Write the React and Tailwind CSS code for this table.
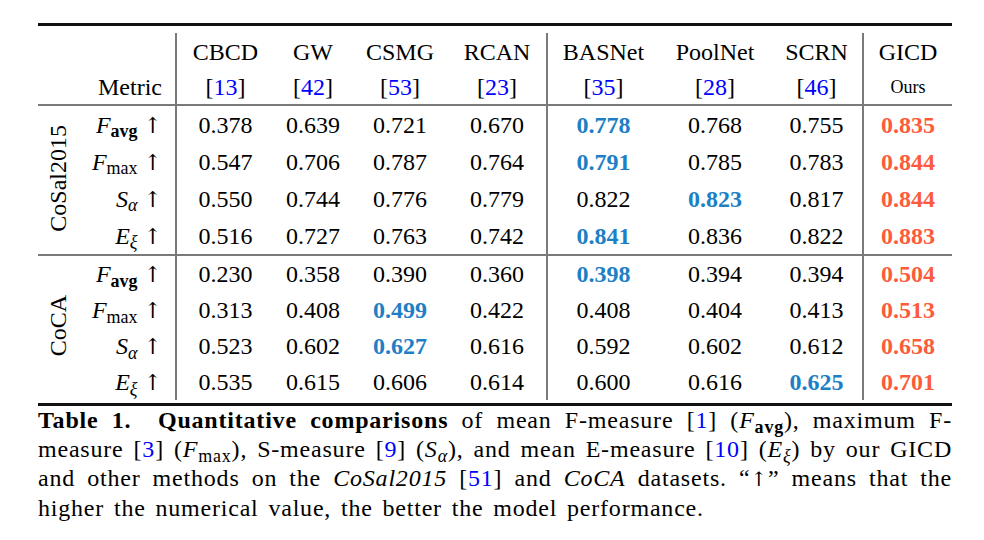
const methods = [
  { name: "CBCD", ref: "13", w: "w-[98px]", sep: true },
  { name: "GW", ref: "42", w: "w-[78px]" },
  { name: "CSMG", ref: "53", w: "w-[96px]" },
  { name: "RCAN", ref: "23", w: "w-[99px]" },
  { name: "BASNet", ref: "35", w: "w-[112px]", sep: true },
  { name: "PoolNet", ref: "28", w: "w-[112px]" },
  { name: "SCRN", ref: "46", w: "w-[92px]" },
];

const groups = [
  {
    name: "CoSal2015",
    h: "h-[37px]",
    rows: [
      { m: "Favg", v: ["0.378", "0.639", "0.721", "0.670", "0.778", "0.768", "0.755"], best: 4, ours: "0.835" },
      { m: "Fmax", v: ["0.547", "0.706", "0.787", "0.764", "0.791", "0.785", "0.783"], best: 4, ours: "0.844" },
      { m: "S", v: ["0.550", "0.744", "0.776", "0.779", "0.822", "0.823", "0.817"], best: 5, ours: "0.844" },
      { m: "E", v: ["0.516", "0.727", "0.763", "0.742", "0.841", "0.836", "0.822"], best: 4, ours: "0.883" },
    ],
  },
  {
    name: "CoCA",
    h: "h-[36px]",
    rows: [
      { m: "Favg", v: ["0.230", "0.358", "0.390", "0.360", "0.398", "0.394", "0.394"], best: 4, ours: "0.504" },
      { m: "Fmax", v: ["0.313", "0.408", "0.499", "0.422", "0.408", "0.404", "0.413"], best: 2, ours: "0.513" },
      { m: "S", v: ["0.523", "0.602", "0.627", "0.616", "0.592", "0.602", "0.612"], best: 2, ours: "0.658" },
      { m: "E", v: ["0.535", "0.615", "0.606", "0.614", "0.600", "0.616", "0.625"], best: 6, ours: "0.701" },
    ],
  },
];

// math symbols like F_avg, S_alpha
function Sym({ m }) {
  if (m === "Favg")
    return (
      <>
        <i>F</i>
        <sub className="font-bold">avg</sub>
      </>
    );
  if (m === "Fmax")
    return (
      <>
        <i>F</i>
        <sub>max</sub>
      </>
    );
  if (m === "S")
    return (
      <>
        <i>S</i>
        <sub>
          <i>α</i>
        </sub>
      </>
    );
  return (
    <>
      <i>E</i>
      <sub>
        <i>ξ</i>
      </sub>
    </>
  );
}

function Arrow({ size = "text-[22px]" }) {
  return <span className={`font-['DejaVu_Serif',serif] ${size}`}>↑</span>;
}

function Cite({ n }) {
  return (
    <span>
      [<span className="text-[#0000ff]">{n}</span>]
    </span>
  );
}

const vline = "border-l-2 border-[#7a7a7a]";

function MidRule() {
  return (
    <tr className="h-[2px]">
      <td colSpan={10} className="p-0 bg-[#7a7a7a]" />
    </tr>
  );
}

export default function App() {
  return (
    <div className="w-[984px] h-[540px] bg-white text-black pl-[38px] pt-[23px] font-['Liberation_Serif','Times_New_Roman',serif]">
      <div className="w-[914px]">
        {/* top rule */}
        <div className="h-[3px] bg-[#111]" />

        <table className="w-[914px] table-fixed text-[24px] leading-none text-black font-['Liberation_Serif','Times_New_Roman',serif]">
          <colgroup>
            <col className="w-[40px]" />
            <col className="w-[98px]" />
            {methods.map((c) => (
              <col key={c.name} className={c.w} />
            ))}
            <col className="w-[89px]" />
          </colgroup>
          <tbody>
            <tr className="h-[7px]">
              <td colSpan={10} className="p-0" />
            </tr>
            <tr className="h-[37px]">
              <td />
              <td />
              {methods.map((c) => (
                <td key={c.name} className={`text-center ${c.sep ? vline : ""}`}>
                  {c.name}
                </td>
              ))}
              <td className={`text-center ${vline}`}>GICD</td>
            </tr>
            <tr className="h-[34px]">
              <td />
              <td className="text-right pr-[13px]">Metric</td>
              {methods.map((c) => (
                <td key={c.name} className={`text-center ${c.sep ? vline : ""}`}>
                  <Cite n={c.ref} />
                </td>
              ))}
              <td className={`text-center text-[18px] ${vline}`}>Ours</td>
            </tr>
            {groups.map((g) => (
              <GroupRows key={g.name} g={g} />
            ))}
            <tr className="h-[3px]">
              <td colSpan={10} className="p-0" />
            </tr>
          </tbody>
        </table>

        {/* bottom rule */}
        <div className="h-[3px] bg-[#111]" />

        <div className="text-[24px] leading-[29px] tracking-[0.8px] [word-spacing:3px]">
          <div className="text-justify [text-align-last:justify]">
            <b>Table 1.</b>&nbsp; <b>Quantitative comparisons</b> of mean F-measure <Cite n="1" /> (<Sym m="Favg" />), maximum F-
          </div>
          <div className="text-justify [text-align-last:justify]">
            measure <Cite n="3" /> (<Sym m="Fmax" />), S-measure <Cite n="9" /> (<Sym m="S" />), and mean E-measure <Cite n="10" /> (<Sym m="E" />) by our GICD
          </div>
          <div className="text-justify [text-align-last:justify]">
            and other methods on the <i>CoSal2015</i> <Cite n="51" /> and <i>CoCA</i> datasets. “<Arrow size="text-[20px]" />” means that the
          </div>
          <div>higher the numerical value, the better the model performance.</div>
        </div>
      </div>
    </div>
  );
}

function GroupRows({ g }) {
  return (
    <>
      <MidRule />
      {g.rows.map((r, i) => (
        <tr key={r.m} className={g.h}>
          {i === 0 && (
            <td rowSpan={4} className="p-0 text-center align-middle">
              <span className="inline-block [writing-mode:vertical-rl] rotate-180">{g.name}</span>
            </td>
          )}
          <td className="text-right pr-[13px] whitespace-nowrap">
            <Sym m={r.m} /> <Arrow />
          </td>
          {r.v.map((v, j) => (
            <td
              key={j}
              className={`text-center ${methods[j].sep ? vline : ""} ${j === r.best ? "font-bold text-[#1d80c6]" : ""}`}
            >
              {v}
            </td>
          ))}
          <td className={`text-center font-bold text-[#fd5b3b] ${vline}`}>{r.ours}</td>
        </tr>
      ))}
    </>
  );
}
